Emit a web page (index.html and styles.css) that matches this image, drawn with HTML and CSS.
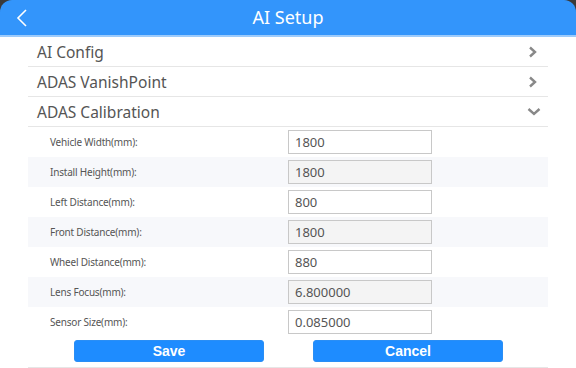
FILE: index.html
```html
<!DOCTYPE html>
<html>
<head>
<meta charset="utf-8">
<link rel="stylesheet" href="styles.css">
</head>
<body>
<div class="topbar">
  <header class="header">
    <svg class="back" width="12" height="20" viewBox="0 0 12 20"><path d="M10 2 L2 10 L10 18" fill="none" stroke="#fff" stroke-width="1.6"/></svg>
    <h1 class="title">AI Setup</h1>
  </header>
</div>
<div class="content">
  <div class="section">
    <span>AI Config</span>
    <svg class="chev" width="10" height="12" viewBox="0 0 10 12"><path d="M2 1.5 L7 6 L2 10.5" fill="none" stroke="#888" stroke-width="2.4"/></svg>
  </div>
  <div class="section">
    <span>ADAS VanishPoint</span>
    <svg class="chev" width="10" height="12" viewBox="0 0 10 12"><path d="M2 1.5 L7 6 L2 10.5" fill="none" stroke="#888" stroke-width="2.4"/></svg>
  </div>
  <div class="section">
    <span>ADAS Calibration</span>
    <svg class="chev down" width="14" height="10" viewBox="0 0 14 10"><path d="M1.5 2 L7 7 L12.5 2" fill="none" stroke="#888" stroke-width="2.4"/></svg>
  </div>
  <div class="form">
    <div class="row"><label>Vehicle Width(mm):</label><input class="field" value="1800"></div>
    <div class="row alt"><label>Install Height(mm):</label><input class="field ro" value="1800" readonly></div>
    <div class="row"><label>Left Distance(mm):</label><input class="field" value="800"></div>
    <div class="row alt"><label>Front Distance(mm):</label><input class="field ro" value="1800" readonly></div>
    <div class="row"><label>Wheel Distance(mm):</label><input class="field" value="880"></div>
    <div class="row alt"><label>Lens Focus(mm):</label><input class="field ro" value="6.800000" readonly></div>
    <div class="row"><label>Sensor Size(mm):</label><input class="field" value="0.085000"></div>
  </div>
  <div class="actions">
    <button class="btn">Save</button>
    <button class="btn">Cancel</button>
  </div>
</div>
</body>
</html>
```
FILE: styles.css
```css
html, body {
  margin: 0;
  padding: 0;
  background: #fff;
  font-family: "Noto Sans", "Open Sans", sans-serif;
}
.topbar {
  background: #3a3a3a;
}
.header {
  height: 35px;
  background: #3395fb;
  border-radius: 12px 12px 0 0;
  border-bottom: 2px solid #9dcbfb;
  display: flex;
  align-items: center;
  justify-content: center;
  position: relative;
}
.back {
  position: absolute;
  left: 16px;
  top: 8px;
}
.title {
  margin: 0;
  color: #fff;
  font-size: 18px;
  font-weight: 400;
  line-height: 35px;
}
.content {
  margin: 0 28px;
}
.section {
  height: 29px;
  border-bottom: 1px solid #e6e6e6;
  display: flex;
  align-items: center;
  justify-content: space-between;
  padding: 0 10px 0 9px;
  color: #555;
  font-size: 15.5px;
}
.chev.down {
  margin-right: -3px;
}
.row {
  height: 30px;
  display: flex;
  align-items: center;
  padding-left: 22px;
}
.row.alt {
  background: #f7f8fb;
}
.row label {
  width: 238px;
  font-size: 10px;
  letter-spacing: -0.2px;
  color: #555;
}
.field {
  box-sizing: border-box;
  width: 144px;
  height: 24px;
  border: 1px solid #c8c8c8;
  padding: 0 6px;
  font-family: "Noto Sans", sans-serif;
  font-size: 13px;
  color: #555;
  background: #fff;
  outline: none;
}
.field.ro {
  background: #f4f4f4;
}
.actions {
  display: flex;
  padding: 3px 0 0 46px;
  gap: 49px;
  height: 27px;
  border-bottom: 1px solid #e6e6e6;
}
.btn {
  width: 190px;
  height: 22px;
  border: 1px solid #2a8ef5;
  border-radius: 3px;
  background: #1e8cff;
  color: #fff;
  font-family: "Liberation Sans", Arial, sans-serif;
  font-weight: 700;
  font-size: 14px;
  padding: 0;
}
```
